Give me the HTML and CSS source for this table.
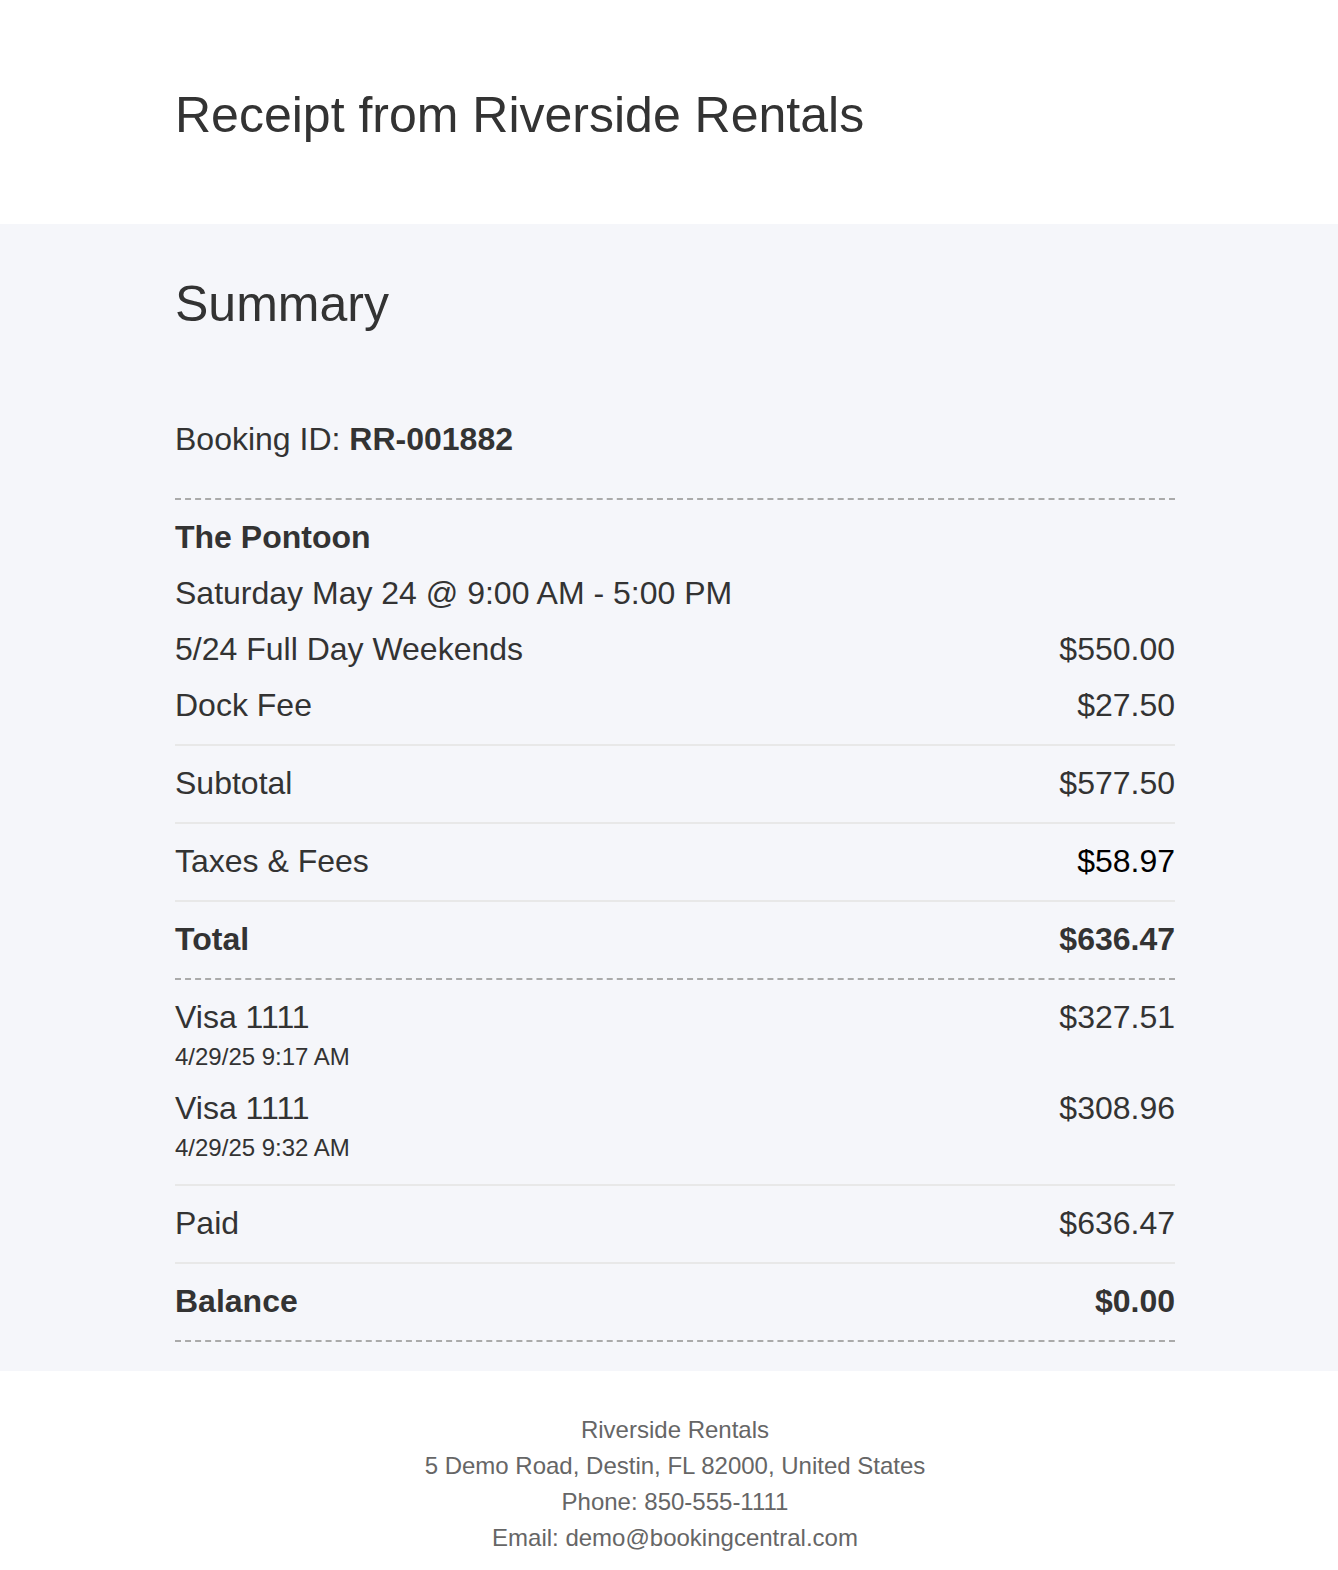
FILE: index.html
```html
<!DOCTYPE html>
<html>
<head>
<meta charset="utf-8">
<link rel="stylesheet" href="styles.css">
</head>
<body>
<div class="page">
  <header class="top">
    <div class="wrap">
      <h1 class="title">Receipt from Riverside Rentals</h1>
    </div>
  </header>
  <main class="summary">
    <div class="wrap">
      <h2 class="heading">Summary</h2>
      <p class="booking">Booking ID: <b>RR-001882</b></p>
      <div class="items">
        <div class="line bold">The Pontoon</div>
        <div class="line">Saturday May 24 @ 9:00 AM - 5:00 PM</div>
        <div class="line split"><span>5/24 Full Day Weekends</span><span>$550.00</span></div>
        <div class="line split"><span>Dock Fee</span><span>$27.50</span></div>
      </div>
      <div class="row split"><span>Subtotal</span><span>$577.50</span></div>
      <div class="row split"><span>Taxes &amp; Fees</span><span class="black">$58.97</span></div>
      <div class="row split bold last-dashed"><span>Total</span><span>$636.47</span></div>
      <div class="payments">
        <div class="payment">
          <div class="pay-main split"><span>Visa 1111</span><span>$327.51</span></div>
          <div class="pay-date">4/29/25 9:17 AM</div>
        </div>
        <div class="payment">
          <div class="pay-main split"><span>Visa 1111</span><span>$308.96</span></div>
          <div class="pay-date">4/29/25 9:32 AM</div>
        </div>
      </div>
      <div class="row split"><span>Paid</span><span>$636.47</span></div>
      <div class="row split bold last-dashed"><span>Balance</span><span>$0.00</span></div>
    </div>
  </main>
  <footer class="footer">
    <div>Riverside Rentals</div>
    <div>5 Demo Road, Destin, FL 82000, United States</div>
    <div>Phone: 850-555-1111</div>
    <div>Email: demo@bookingcentral.com</div>
  </footer>
</div>
</body>
</html>
```
FILE: styles.css
```css
html, body {
  margin: 0;
  padding: 0;
  background: #ffffff;
}
body {
  font-family: "Liberation Sans", Arial, Helvetica, sans-serif;
  color: #333333;
}
.page {
  padding-left: 12px;
}
.wrap {
  width: 1000px;
  margin: 0 auto;
}
.top {
  height: 224px;
  box-sizing: border-box;
  padding-top: 85px;
}
.title {
  margin: 0;
  font-size: 50px;
  line-height: 60px;
  font-weight: normal;
}
.summary {
  background: #f5f6fa;
  margin-left: -12px;
  padding-left: 12px;
  padding-top: 50px;
  padding-bottom: 29px;
}
.heading {
  margin: 0;
  font-size: 50px;
  line-height: 60px;
  font-weight: normal;
}
.booking {
  margin: 86px 0 0;
  font-size: 32px;
  line-height: 38px;
  padding-bottom: 40px;
  border-bottom: 2px dashed #aaaaaa;
}
.booking b {
  font-weight: bold;
}
.items {
  padding: 9px 0 11px;
  border-bottom: 2px solid #e8e8e8;
}
.line {
  font-size: 32px;
  line-height: 56px;
}
.split {
  display: flex;
  justify-content: space-between;
}
.bold {
  font-weight: bold;
}
.row {
  font-size: 32px;
  line-height: 56px;
  padding: 9px 0 11px;
  border-bottom: 2px solid #e8e8e8;
}
.row.last-dashed {
  border-bottom: 2px dashed #aaaaaa;
}
.black {
  color: #000000;
}
.payments {
  padding: 15px 0 18px;
  display: flex;
  flex-direction: column;
  gap: 11px;
  border-bottom: 2px solid #e8e8e8;
}
.pay-main {
  font-size: 32px;
  line-height: 44px;
}
.pay-date {
  font-size: 24px;
  line-height: 36px;
}
.footer {
  padding: 41px 0 15px;
  text-align: center;
  font-size: 24px;
  line-height: 36px;
  color: #666666;
}
```
